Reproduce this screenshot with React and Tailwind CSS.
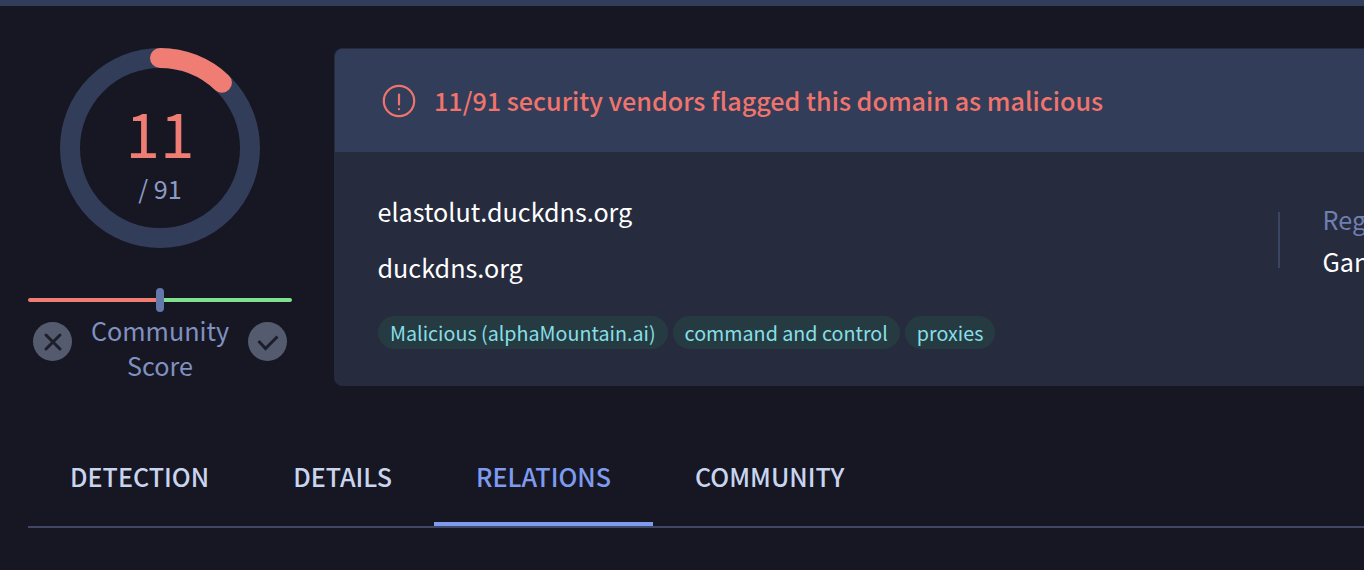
import React from "react";

const font = { fontFamily: '"Noto Sans CJK JP", "Noto Sans", sans-serif' };

function Ring() {
  return (
    <div className="relative w-[200px] h-[200px]">
      <svg width="200" height="200" viewBox="0 0 200 200" className="block">
        <circle cx="100" cy="100" r="90" fill="none" stroke="#323d5a" strokeWidth="20" />
        <path d="M100 10 A90 90 0 0 1 161.9 34.7" fill="none" stroke="#ef7d74" strokeWidth="20" strokeLinecap="round" />
      </svg>
      <div className="absolute inset-0 flex flex-col items-center">
        <div className="mt-[51px] text-[62px] leading-[64px] font-normal text-[#ef7d74]">11</div>
        <div className="mt-[9px] text-[25.2px] leading-[32px] font-normal text-[#8d9bc4]">/ 91</div>
      </div>
    </div>
  );
}

function Tab({ children, active }) {
  return (
    <div className={active
      ? "h-[100px] px-[42px] flex items-start pt-[34px] border-b-[4px] border-[#7e9bf0] text-[#7e9bf0]"
      : "h-[100px] px-[42px] flex items-start pt-[34px] text-[#c9d5ee]"}>
      <span className="text-[25.1px] leading-[32px] font-medium">{children}</span>
    </div>
  );
}

export default function App() {
  return (
    <div style={font} className="w-[1364px] h-[570px] overflow-hidden bg-[#161722]">
      <div className="h-[6px] bg-[#323d5a]" />
      <div className="pl-[28px]">
        <div className="flex gap-[42px] pt-[42px]">
          <div className="w-[264px] shrink-0 flex flex-col items-center">
            <Ring />
            <div className="relative mt-[40px] w-full h-[24px] flex items-center">
              <div className="w-1/2 h-[4px] rounded-l-full bg-[#ef7d74]" />
              <div className="w-1/2 h-[4px] rounded-r-full bg-[#7fe08f]" />
              <div className="absolute left-[128px] top-0 w-[8px] h-[24px] rounded-full bg-[#6377aa]" />
            </div>
            <div className="w-full flex items-start justify-between px-[5px]">
              <div className="w-[39px] h-[39px] mt-[10px] rounded-full bg-[#555b6e] flex items-center justify-center">
                <svg width="20" height="20" viewBox="0 0 20 20" fill="none" stroke="#1c1e2b" strokeWidth="3" strokeLinecap="round">
                  <path d="M3 3 L17 17 M17 3 L3 17" />
                </svg>
              </div>
              <div className="mt-[1px] text-center text-[25.2px] leading-[35px] text-[#8091c0]">Community<br />Score</div>
              <div className="w-[39px] h-[39px] mt-[10px] rounded-full bg-[#555b6e] flex items-center justify-center">
                <svg width="22" height="18" viewBox="0 0 22 18" fill="none" stroke="#1c1e2b" strokeWidth="3">
                  <path d="M1.5 8 L8.5 15.5 L20.5 3.5" />
                </svg>
              </div>
            </div>
          </div>
          <div className="w-[1200px] shrink-0 h-[338px] rounded-[8px] overflow-hidden bg-[#262b3e] border border-[#262b3e]">
            <div className="h-[103px] bg-[#323d5a] flex items-center pl-[47px]">
              <svg width="34" height="34" viewBox="0 0 34 34" fill="none" stroke="#f0746c" strokeWidth="2.2" strokeLinecap="round">
                <circle cx="17" cy="17" r="15.2" />
                <path d="M17 10.5 V20.5" />
                <path d="M17 25 V25.2" />
              </svg>
              <span className="ml-[18px] -mt-[2px] text-[25.15px] font-medium leading-[32px] text-[#f0746c]">11/91 security vendors flagged this domain as malicious</span>
            </div>
            <div className="flex pl-[43px] pt-[41px]">
              <div className="w-[900px] shrink-0">
                <div className="-ml-[0.5px] text-[25.15px] leading-[36px] text-white">elastolut.duckdns.org</div>
                <div className="-ml-[0.5px] mt-[20px] text-[25.15px] leading-[36px] text-white">duckdns.org</div>
                <div className="mt-[31px] flex gap-[5px]">
                  {["Malicious (alphaMountain.ai)", "command and control", "proxies"].map((t) => (
                    <span key={t} className="h-[33px] px-[12px] rounded-full bg-[#263b41] text-[#86dfe6] text-[19.7px] leading-[33px]">{t}</span>
                  ))}
                </div>
              </div>
              <div className="w-[2px] h-[56px] mt-[19px] bg-[#3a4564]" />
              <div className="ml-[42.5px] mt-[6px]">
                <div className="text-[25.2px] leading-[40px] text-[#6f7fb0]">Registrar</div>
                <div className="text-[25.2px] leading-[40px] mt-[2px] text-white">Gandi</div>
              </div>
            </div>
          </div>
        </div>
        <div className="mt-[40px] flex border-b-[2px] border-[#3f4966] h-[102px] items-start">
          <Tab>DETECTION</Tab>
          <Tab>DETAILS</Tab>
          <Tab active>RELATIONS</Tab>
          <Tab>COMMUNITY</Tab>
        </div>
      </div>
    </div>
  );
}
